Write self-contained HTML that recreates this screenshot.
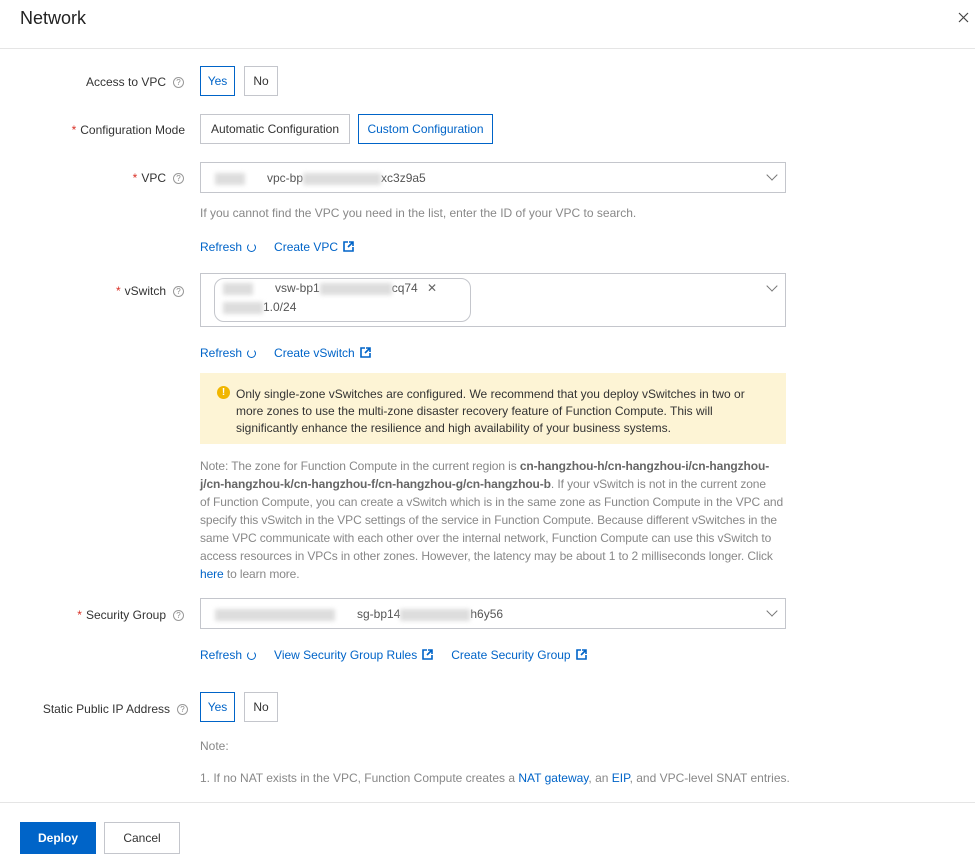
<!DOCTYPE html>
<html><head><meta charset="utf-8"><style>
*{margin:0;padding:0;box-sizing:border-box}
body{width:975px;height:857px;background:#fff;font-family:"Liberation Sans",sans-serif;font-size:12px;color:#333;position:relative;overflow:hidden}
.a{position:absolute;white-space:nowrap}
.lbl{position:absolute;right:809px;white-space:nowrap;line-height:16px}
.star{color:#d93026;margin-right:4px}
.q{position:absolute;width:11px;height:11px;border:1px solid #999;border-radius:50%;font-size:8px;line-height:9px;text-align:center;color:#888;left:173px}
.btn{position:absolute;border:1px solid #c4c6cc;background:#fff;color:#333;text-align:center;line-height:28px;height:30px}
.on{border-color:#0064c8;color:#0064c8}
.sel{position:absolute;left:200px;width:586px;border:1px solid #c4c6cc;height:31px}
.chev{position:absolute;right:9px;top:8px;width:8px;height:8px;border-right:1.3px solid #777;border-bottom:1.3px solid #777;transform:rotate(45deg)}
.blur{display:inline-block;background:#ddd;filter:blur(2px);height:12px;vertical-align:middle}
.help{color:#888}
.link{color:#0064c8}
.ref{display:inline-block;width:9px;height:9px;border:1.3px solid #0064c8;border-radius:50%;border-top-color:transparent;margin-left:5px;vertical-align:-1px}
.ext{display:inline-block;width:11px;height:11px;margin-left:5px;vertical-align:-1px}
.note div{height:18px;line-height:18px}
</style></head><body>
<div class="a" style="left:20px;top:8px;font-size:18px;color:#222">Network</div>
<svg class="a" style="left:958px;top:12px" width="11" height="11" viewBox="0 0 11 11"><path d="M1 1L10 10M10 1L1 10" stroke="#444" stroke-width="1.2"/></svg>
<div class="a" style="left:0;top:48px;width:975px;height:1px;background:#e5e5e5"></div>

<div class="lbl" style="top:74px">Access to VPC</div><div class="q" style="top:77px">?</div>
<div class="btn on" style="left:200px;top:66px;width:35px">Yes</div>
<div class="btn" style="left:244px;top:66px;width:34px">No</div>

<div class="lbl" style="top:122px;right:790px"><span class="star">*</span>Configuration Mode</div>
<div class="btn" style="left:200px;top:114px;width:150px">Automatic Configuration</div>
<div class="btn on" style="left:358px;top:114px;width:135px">Custom Configuration</div>

<div class="lbl" style="top:170px"><span class="star">*</span>VPC</div><div class="q" style="top:173px">?</div>
<div class="sel" style="top:162px"><div class="a" style="left:14px;top:8px;color:#555"><span class="blur" style="width:30px"></span><span style="margin-left:22px">vpc-bp</span><span class="blur" style="width:78px"></span>xc3z9a5</div><div class="chev"></div></div>
<div class="a help" style="left:200px;top:206px">If you cannot find the VPC you need in the list, enter the ID of your VPC to search.</div>
<div class="a link" style="left:200px;top:240px">Refresh<span class="ref"></span><span style="margin-left:18px">Create VPC</span><svg class="ext" viewBox="0 0 11 11"><path d="M5 1H1V10H10V6" fill="none" stroke="#0064c8" stroke-width="1.6"/><path d="M6 1H10V5M10 1L5 6" fill="none" stroke="#0064c8" stroke-width="1.6"/></svg></div>

<div class="lbl" style="top:283px"><span class="star">*</span>vSwitch</div><div class="q" style="top:286px">?</div>
<div class="sel" style="top:273px;height:54px"><div class="a" style="left:13px;top:4px;width:257px;height:44px;border:1px solid #c4c6cc;border-radius:10px;color:#555;line-height:19px;padding-left:8px;white-space:normal"><span class="blur" style="width:30px"></span><span style="margin-left:22px">vsw-bp1</span><span class="blur" style="width:72px"></span>cq74 <span style="margin-left:6px;color:#666">✕</span><br><span class="blur" style="width:40px"></span>1.0/24</div><div class="chev"></div></div>
<div class="a link" style="left:200px;top:346px">Refresh<span class="ref"></span><span style="margin-left:18px">Create vSwitch</span><svg class="ext" viewBox="0 0 11 11"><path d="M5 1H1V10H10V6" fill="none" stroke="#0064c8" stroke-width="1.6"/><path d="M6 1H10V5M10 1L5 6" fill="none" stroke="#0064c8" stroke-width="1.6"/></svg></div>

<div class="a" style="left:200px;top:373px;width:586px;height:71px;background:#fdf4d5"></div>
<div class="a" style="left:217px;top:386px;width:13px;height:13px;border-radius:50%;background:#f1b600;color:#fff;font-size:10px;font-weight:bold;text-align:center;line-height:13px">!</div>
<div class="a" style="left:236px;top:386px;line-height:17px;color:#333">Only single-zone vSwitches are configured. We recommend that you deploy vSwitches in two or<br>more zones to use the multi-zone disaster recovery feature of Function Compute. This will<br>significantly enhance the resilience and high availability of your business systems.</div>

<div class="a help note" style="left:200px;top:457px;letter-spacing:-0.1px">
<div>Note: The zone for Function Compute in the current region is <b style="color:#666">cn-hangzhou-h/cn-hangzhou-i/cn-hangzhou-</b></div>
<div><b style="color:#666">j/cn-hangzhou-k/cn-hangzhou-f/cn-hangzhou-g/cn-hangzhou-b</b>. If your vSwitch is not in the current zone</div>
<div>of Function Compute, you can create a vSwitch which is in the same zone as Function Compute in the VPC and</div>
<div>specify this vSwitch in the VPC settings of the service in Function Compute. Because different vSwitches in the</div>
<div>same VPC communicate with each other over the internal network, Function Compute can use this vSwitch to</div>
<div>access resources in VPCs in other zones. However, the latency may be about 1 to 2 milliseconds longer. Click</div>
<div><span class="link">here</span> to learn more.</div>
</div>

<div class="lbl" style="top:607px"><span class="star">*</span>Security Group</div><div class="q" style="top:610px">?</div>
<div class="sel" style="top:598px"><div class="a" style="left:14px;top:8px;color:#555"><span class="blur" style="width:120px"></span><span style="margin-left:22px">sg-bp14</span><span class="blur" style="width:70px"></span>h6y56</div><div class="chev"></div></div>
<div class="a link" style="left:200px;top:648px">Refresh<span class="ref"></span><span style="margin-left:18px">View Security Group Rules</span><svg class="ext" viewBox="0 0 11 11"><path d="M5 1H1V10H10V6" fill="none" stroke="#0064c8" stroke-width="1.6"/><path d="M6 1H10V5M10 1L5 6" fill="none" stroke="#0064c8" stroke-width="1.6"/></svg><span style="margin-left:18px">Create Security Group</span><svg class="ext" viewBox="0 0 11 11"><path d="M5 1H1V10H10V6" fill="none" stroke="#0064c8" stroke-width="1.6"/><path d="M6 1H10V5M10 1L5 6" fill="none" stroke="#0064c8" stroke-width="1.6"/></svg></div>

<div class="lbl" style="top:701px;right:805px">Static Public IP Address</div><div class="q" style="top:704px;left:177px">?</div>
<div class="btn on" style="left:200px;top:692px;width:35px">Yes</div>
<div class="btn" style="left:244px;top:692px;width:34px">No</div>
<div class="a help" style="left:200px;top:739px">Note:</div>
<div class="a help" style="left:200px;top:771px">1. If no NAT exists in the VPC, Function Compute creates a <span class="link">NAT gateway</span>, an <span class="link">EIP</span>, and VPC-level SNAT entries.</div>

<div class="a" style="left:0;top:802px;width:975px;height:1px;background:#e5e5e5"></div>
<div class="btn" style="left:20px;top:822px;width:76px;height:32px;line-height:30px;background:#0064c8;border-color:#0064c8;color:#fff;font-weight:bold">Deploy</div>
<div class="btn" style="left:104px;top:822px;width:76px;height:32px;line-height:30px">Cancel</div>
</body></html>
